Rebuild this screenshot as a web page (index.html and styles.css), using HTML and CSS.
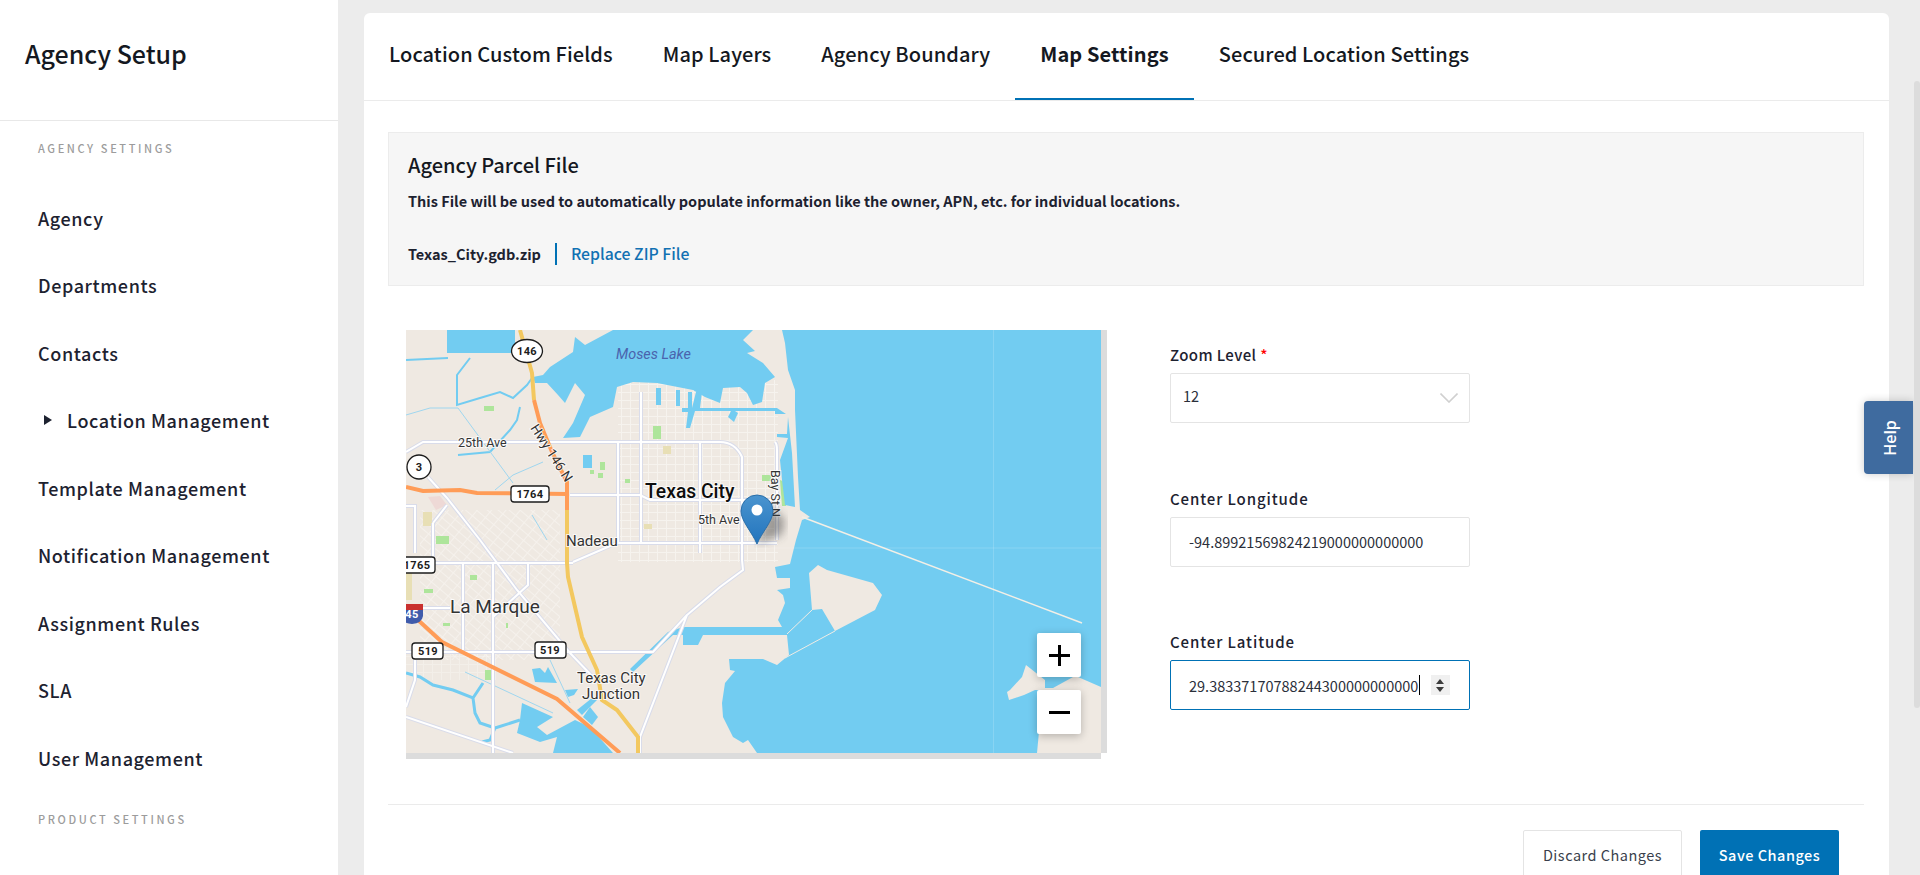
FILE: index.html
```html
<!DOCTYPE html>
<html lang="en">
<head>
    <meta charset="UTF-8">
    <title>Agency Setup</title>
    <link rel="stylesheet" href="styles.css">
</head>
<body>
    <aside class="sidebar">
        <h1 class="sidebar-title">Agency Setup</h1>
        <nav class="side-nav">
            <div class="nav-heading first">AGENCY SETTINGS</div>
            <a class="nav-item">Agency</a>
            <a class="nav-item">Departments</a>
            <a class="nav-item">Contacts</a>
            <a class="nav-item nested"><span class="caret-right"></span>Location Management</a>
            <a class="nav-item">Template Management</a>
            <a class="nav-item">Notification Management</a>
            <a class="nav-item">Assignment Rules</a>
            <a class="nav-item">SLA</a>
            <a class="nav-item">User Management</a>
            <div class="nav-heading">PRODUCT SETTINGS</div>
        </nav>
    </aside>

    <main class="content">
        <section class="card">
            <div class="tabs">
                <a class="tab">Location Custom Fields</a>
                <a class="tab">Map Layers</a>
                <a class="tab">Agency Boundary</a>
                <a class="tab active">Map Settings</a>
                <a class="tab">Secured Location Settings</a>
            </div>

            <div class="card-body">
                <div class="parcel-panel">
                    <h2>Agency Parcel File</h2>
                    <p>This File will be used to automatically populate information like the owner, APN, etc. for individual locations.</p>
                    <div class="file-row">
                        <strong>Texas_City.gdb.zip</strong>
                        <a class="file-link">Replace ZIP File</a>
                    </div>
                </div>

                <div class="settings-row">
                    <div class="map">
                        <svg class="map-svg" viewBox="406 330 695 423" width="695" height="423">
                            <defs>
                                <pattern id="streets" width="9" height="8" patternUnits="userSpaceOnUse">
                                    <path d="M0 .5H9M.5 0V8" class="street-line"/>
                                </pattern>
                                <pattern id="streets-alt" width="11" height="7" patternUnits="userSpaceOnUse" patternTransform="rotate(40)">
                                    <path d="M0 .5H11M.5 0V7" class="street-line"/>
                                </pattern>
                                <linearGradient id="pin-fill" x1="0" y1="0" x2="0" y2="1">
                                    <stop offset="0" stop-color="#4a94cf"/>
                                    <stop offset="1" stop-color="#2274bd"/>
                                </linearGradient>
                                <filter id="pin-blur"><feGaussianBlur stdDeviation="4"/></filter>
                                <path id="road-lines" d="M406 452L423 442H720Q735 442 742 457V560L743 570L720 587L687 615L640 737V753
                                    M428 477L447 498L480 540L517 590L570 653L593 677
                                    M570 495H640L650 500H777M618 443V543M641 392V543M700 443V553M775 442Q777 444 777 450V540
                                    M573 562L617 543H777M435 563H573M406 652H653L687 615M406 608H450
                                    M463 563V650M493 563V753M528 563V585L493 617M415 660V680L406 707M406 717L513 753
                                    M433 523V563M406 506H415V553M447 505L433 523M406 563H435"/>
                            </defs>

                            <rect x="406" y="330" width="695" height="423" class="land"/>

                            <!-- street grids under everything else -->
                            <rect x="618" y="380" width="160" height="182" fill="url(#streets)" opacity=".6"/>
                            <rect x="420" y="510" width="140" height="150" fill="url(#streets-alt)" opacity=".5"/>
                            <rect x="406" y="650" width="90" height="30" fill="url(#streets)" opacity=".35"/>

                            <!-- parks -->
                            <g class="park">
                                <rect x="484" y="406" width="10" height="5"/>
                                <rect x="653" y="426" width="8" height="13"/>
                                <rect x="588" y="461" width="3" height="5"/><rect x="590" y="470" width="4" height="4"/><rect x="600" y="462" width="5" height="8"/>
                                <rect x="598" y="473" width="5" height="5"/><rect x="625" y="479" width="5" height="4"/>
                                <rect x="436" y="536" width="13" height="8"/><rect x="424" y="589" width="9" height="4"/>
                                <rect x="470" y="575" width="7" height="5"/><rect x="443" y="623" width="7" height="3"/>
                                <rect x="485" y="670" width="8" height="10"/><rect x="506" y="623" width="2" height="5"/>
                                <rect x="762" y="475" width="9" height="6"/>
                                <path d="M780 480L785 482L786 506L782 506Z"/>
                            </g>
                            <g class="sand">
                                <rect x="663" y="446" width="8" height="8"/><rect x="644" y="524" width="8" height="5"/>
                                <rect x="423" y="512" width="9" height="14"/><path d="M406 600H412V570H406Z"/>
                            </g>
                            <path class="mall" d="M428 497L440 496L447 505L436 510Z"/>

                            <!-- water -->
                            <g class="water">
                                <rect x="447" y="330" width="68" height="23"/>
                                <path d="M533 377L543 375L550 367L573 352L575 337L585 345L613 330H753L743 340L755 351L747 353L763 363L775 377L765 383L762 402L753 405L747 393L740 387L723 388L720 403L705 397L693 390L657 383L633 382L617 387L613 407L590 417L580 437L563 438L573 423L585 395L575 383L565 403L558 395L547 383L535 383Z"/>
                                <path d="M656 388H661V405H656ZM676 390H680V406H676ZM688 392H692V408H688ZM702 392L700 408H692L696 392Z"/>
                                <path d="M682 408H777L786 414H775V411H695L690 428H686L688 412H682Z"/>
                                <path d="M732 409L738 413L734 422L728 417Z"/>
                                <path d="M782 330H1101V687L1078 677L1073 677L1053 688L1045 688V680L1026 665L1022 677L1010 690L1007 692L1009 700L1024 695L1035 690H1045L1041 710L1037 753H757L748 740L743 743L733 737L723 717L722 703L725 683L735 671L730 670L729 659L763 659L777 665L789 655L787 635H683V645L698 645L703 635H673L633 672L630 669L668 632L683 627H782L778 620L785 603L783 595L777 590L790 588V578L777 578L775 567L790 564L796 540L802 520L810 517L800 510L798 477L795 410L795 390L788 370L785 343Z"/>
                                <path d="M788 417L792 453L795 507L785 505L782 480L780 460L788 438L777 437V434L787 434Z"/>
                                <path d="M522 703L553 717L537 727L547 735L575 720L590 727L613 753H553L557 737L540 742L517 733L520 720Z"/>
                                <path d="M590 707L598 717L592 725L583 717Z"/>
                                <path d="M532 669L540 668L545 673L548 667L557 683L535 682Z"/>
                                <path d="M565 690L578 689L574 695L568 697Z"/>
                                <path d="M577 710L592 698L597 700L582 715Z"/>
                                <rect x="583" y="455" width="9" height="13"/>
                            </g>
                            <g class="river">
                                <path d="M406 360L448 358M470 358L457 375V405L480 398L500 392L513 398L527 385L532 378M520 407L517 420L510 430L490 452L458 455"/>
                                <path d="M406 673L420 677L433 685L453 690L473 698L483 683M473 698L475 713L480 723L495 728L490 740L482 742M495 728L520 720" class="creek"/>
                            </g>
                            <path class="brook" d="M406 415L430 408H458L513 483M495 490L513 475L543 462M532 515L547 540M465 672L553 713M550 660L570 703"/>

                            <!-- barrier strip, jetty and inner islands -->
                            <g class="shore">
                                <path d="M802 517L1082 623" class="jetty"/>
                                <path d="M812 610L787 634M835 631L785 658" class="levee"/>
                            </g>
                            <path class="land" d="M809 573L818 565L827 570L873 583L882 595L875 610L835 631L822 609L812 610Z"/>

                            <!-- roads -->
                            <use href="#road-lines" class="road-casing"/>
                            <use href="#road-lines" class="road-fill"/>

                            <!-- highways -->
                            <path class="hwy-yellow" d="M520 330L532 373L534 400M567 510V563L568 577L582 637L597 670L602 700L617 710L638 737V753"/>
                            <path class="hwy-orange" d="M534 400L540 423L552 452L567 482V510"/>
                            <path class="hwy-orange" d="M406 487L423 491L460 490L477 493L567 494"/>
                            <path class="hwy-orange" d="M418 620L442 642L557 699L620 753"/>

                            <!-- shields -->
                            <g class="shield">
                                <ellipse cx="527" cy="351" rx="15.5" ry="11.5"/>
                                <circle cx="419" cy="467" r="12"/>
                                <rect x="511" y="486" width="38" height="16" rx="3"/>
                                <rect x="400" y="557" width="35" height="16" rx="3"/>
                                <rect x="412" y="643" width="31" height="16" rx="3"/>
                                <rect x="535" y="642" width="31" height="16" rx="3"/>
                            </g>
                            <path class="shield-red" d="M400 604H423V610H400Z"/>
                            <path class="shield-blue" d="M400 610H423V616Q422 623 412 624Q401 623 400 616Z"/>

                            <text class="shield-text" x="527" y="355">146</text>
                            <text class="shield-text" x="419" y="471">3</text>
                            <text class="shield-text" x="530" y="498">1764</text>
                            <text class="shield-text" x="417" y="569">1765</text>
                            <text class="shield-text" x="428" y="655">519</text>
                            <text class="shield-text" x="550" y="654">519</text>
                            <text class="shield-text white" x="412" y="618">45</text>

                            <text class="lbl lake" x="616" y="359">Moses Lake</text>
                            <text class="lbl small" x="458" y="447">25th Ave</text>
                            <text class="lbl hwy-label" transform="translate(530 428) rotate(57)">Hwy 146 N</text>
                            <text class="lbl city" x="645" y="498">Texas City</text>
                            <text class="lbl small" x="698" y="524">5th Ave</text>
                            <text class="lbl mid" x="566" y="546">Nadeau</text>
                            <text class="lbl big" x="450" y="613">La Marque</text>
                            <text class="lbl mid" x="577" y="683">Texas City</text>
                            <text class="lbl mid" x="582" y="699">Junction</text>
                            <text class="lbl small" transform="translate(771 470) rotate(90)">Bay St N</text>

                            <!-- tile seams -->
                            <path class="seam" d="M993.5 330V753M680 548H1101"/>

                            <!-- marker -->
                            <path class="pin-shadow" d="M757 544L770 505L785 520L782 535Z"/>
                            <path class="pin" d="M757 544C752 532 741 521 741 511A16 16 0 0 1 773 511C773 521 762 532 757 544Z"/>
                            <circle cx="757" cy="510" r="5.5" class="pin-hole"/>
                        </svg>
                        <div class="zoom-controls">
                            <button class="zoom-btn" type="button" aria-label="Zoom in"><span class="plus"></span></button>
                            <button class="zoom-btn" type="button" aria-label="Zoom out"><span class="minus"></span></button>
                        </div>
                    </div>

                    <div class="map-form">
                        <div class="form-group">
                            <label class="tight">Zoom Level <span class="req">*</span></label>
                            <div class="select-box">
                                <span>12</span>
                                <svg class="chevron" width="18" height="10" viewBox="0 0 18 10"><path d="M.5 .5L9 9L17.5 .5"/></svg>
                            </div>
                        </div>
                        <div class="form-group">
                            <label for="lng">Center Longitude</label>
                            <input class="text-input" id="lng" type="text" value="-94.89921569824219000000000000">
                        </div>
                        <div class="form-group">
                            <label for="lat">Center Latitude</label>
                            <div class="input-wrap">
                                <input class="text-input focused" id="lat" type="text" value="29.38337170788244300000000000">
                                <span class="text-caret"></span>
                                <span class="spinner"><i class="up"></i><i class="down"></i></span>
                            </div>
                        </div>
                    </div>
                </div>

                <div class="form-actions">
                    <button class="btn btn-light" type="button">Discard Changes</button>
                    <button class="btn btn-primary" type="button">Save Changes</button>
                </div>
            </div>
        </section>
    </main>

    <button class="help-tab" type="button"><span>Help</span></button>
    <div class="scroll-thumb"></div>
</body>
</html>
```

FILE: styles.css
```css
* {
    box-sizing: border-box;
}

html, body {
    height: 875px;
    overflow: hidden;
}

body {
    margin: 0;
    display: flex;
    background-color: #ececec;
    color: #1d2230;
    font-family: "Noto Sans CJK SC", "Noto Sans", sans-serif;
}

/* sidebar */
.sidebar {
    width: 338px;
    flex: none;
    height: 875px;
    background-color: #fff;
}

.sidebar-title {
    margin: 0;
    height: 121px;
    padding: 32px 25px 0;
    font-size: 25px;
    line-height: 42px;
    font-weight: 500;
    color: #141821;
    border-bottom: 1px solid #e8e8e8;
}

.side-nav {
    display: flex;
    flex-direction: column;
}

.nav-heading {
    margin-left: 38px;
    padding-top: 19px;
    font-size: 11px;
    line-height: 16px;
    font-weight: 500;
    letter-spacing: 2.6px;
    color: #9c9c9c;
    height: 60px;
}

.nav-heading.first {
    height: 63px;
    padding-top: 19px;
}

.nav-item {
    height: 67.5px;
    padding-left: 38px;
    display: flex;
    align-items: center;
    font-size: 18px;
    font-weight: 500;
    letter-spacing: .6px;
    color: #1d2230;
}

.nav-item.nested {
    padding-left: 44px;
}

.caret-right {
    width: 0;
    height: 0;
    margin-right: 15px;
    border-left: 8px solid #1d2230;
    border-top: 5.5px solid transparent;
    border-bottom: 5.5px solid transparent;
}

/* main card */
.content {
    flex: 1;
    padding: 13px 31px 0 26px;
}

.card {
    height: 900px;
    background-color: #fff;
    border-radius: 6px 6px 0 0;
}

.tabs {
    height: 88px;
    display: flex;
    border-bottom: 1px solid #ebebeb;
}

.tab {
    padding: 0 25px;
    height: 87px;
    line-height: 82px;
    font-size: 20px;
    font-weight: 500;
    letter-spacing: .1px;
    color: #141821;
}

.tab.active {
    font-weight: 700;
    border-bottom: 2px solid #0071b5;
}

.card-body {
    padding: 31px 25px 0 24px;
}

.parcel-panel {
    height: 154px;
    padding: 18px 19px;
    background-color: #f6f6f6;
    border: 1px solid #ececec;
}

.parcel-panel h2 {
    margin: 0;
    font-size: 20px;
    line-height: 28px;
    font-weight: 500;
    color: #141821;
}

.parcel-panel p {
    margin: 11px 0 0;
    font-size: 14.5px;
    line-height: 22px;
    font-weight: 700;
    color: #1d2230;
}

.file-row {
    margin-top: 31px;
    display: flex;
    align-items: center;
    font-size: 14.5px;
    line-height: 22px;
}

.file-row strong {
    padding-right: 14px;
    border-right: 2px solid #0071b5;
}

.file-link {
    padding-left: 14px;
    font-size: 15.8px;
    font-weight: 500;
    color: #1271b3;
}

/* map + form */
.settings-row {
    margin-top: 44px;
    display: flex;
    height: 475px;
    border-bottom: 1px solid #ebebeb;
}

.map {
    position: relative;
    margin-left: 18px;
    width: 701px;
    height: 429px;
    background:
        linear-gradient(#dcdcdc, #dcdcdc) right top / 6px 423px no-repeat,
        linear-gradient(#dcdcdc, #dcdcdc) left bottom / 695px 6px no-repeat;
}

.map-svg {
    display: block;
}

.land {
    fill: #efe9e2;
}

.street-line {
    fill: none;
    stroke: #fbf9f6;
    stroke-width: 1;
}

.park {
    fill: #aee59b;
}

.sand {
    fill: #e8dfb5;
}

.mall {
    fill: #eed9d6;
}

.water {
    fill: #72ccf1;
}

.river {
    fill: none;
    stroke: #72ccf1;
    stroke-width: 2;
}

.creek {
    stroke-width: 3;
}

.brook {
    fill: none;
    stroke: #9fd6ef;
    stroke-width: 1;
}

.jetty {
    fill: none;
    stroke: #f3efe6;
    stroke-width: 1.5;
}

.levee {
    fill: none;
    stroke: #f0ece5;
    stroke-width: 1;
}

.road-casing {
    fill: none;
    stroke: #d9dcea;
    stroke-width: 4;
}

.road-fill {
    fill: none;
    stroke: #fff;
    stroke-width: 2;
}

.hwy-yellow {
    fill: none;
    stroke: #f3c85f;
    stroke-width: 4;
}

.hwy-orange {
    fill: none;
    stroke: #ff9c57;
    stroke-width: 4;
}

.shield {
    fill: #fff;
    stroke: #1c1c1c;
    stroke-width: 1.3;
}

.shield-red {
    fill: #c9302f;
}

.shield-blue {
    fill: #3f5bab;
}

.shield-text {
    font-family: Roboto, sans-serif;
    font-size: 11px;
    font-weight: 700;
    fill: #1c1c1c;
    text-anchor: middle;
    letter-spacing: .4px;
}

.shield-text.white {
    fill: #fff;
}

.lbl {
    font-family: Roboto, sans-serif;
    fill: #333;
    paint-order: stroke;
    stroke: rgba(255, 255, 255, .75);
    stroke-width: 2px;
}

.lbl.small {
    font-size: 12.5px;
}

.lbl.hwy-label {
    font-size: 13.5px;
}

.lbl.mid {
    font-size: 15px;
}

.lbl.big {
    font-size: 19px;
}

.lbl.city {
    font-size: 19.3px;
    font-weight: 500;
    fill: #0d0d0d;
}

.lbl.lake {
    font-size: 14.4px;
    font-style: italic;
    fill: #4a63ad;
    stroke: none;
}

.seam {
    fill: none;
    stroke: #fff;
    stroke-opacity: .16;
}

.pin-shadow {
    fill: #3b3b3b;
    opacity: .45;
    filter: url(#pin-blur);
}

.pin {
    fill: url(#pin-fill);
    stroke: #2a6ea8;
    stroke-width: 1;
}

.pin-hole {
    fill: #fff;
}

.zoom-controls {
    position: absolute;
    left: 631px;
    top: 303px;
    display: flex;
    flex-direction: column;
    gap: 13px;
}

.zoom-btn {
    width: 44px;
    height: 44px;
    padding: 0;
    border: none;
    border-radius: 2px;
    background-color: #fff;
    box-shadow: 0 2px 8px rgba(0, 0, 0, .25);
    display: flex;
    align-items: center;
    justify-content: center;
}

.plus, .minus {
    display: block;
    position: relative;
    width: 21px;
    height: 3px;
    background-color: #000;
}

.plus::after {
    content: "";
    position: absolute;
    left: 9px;
    top: -9px;
    width: 3px;
    height: 21px;
    background-color: #000;
}

.map-form {
    margin-left: 63px;
    width: 300px;
    padding-top: 14px;
}

.form-group {
    height: 143.5px;
}

.form-group label {
    display: block;
    height: 29px;
    font-size: 15px;
    line-height: 22px;
    font-weight: 500;
    letter-spacing: .9px;
    color: #1d2230;
}

.form-group label.tight {
    letter-spacing: .4px;
}

.req {
    color: #f00;
}

.select-box, .text-input {
    width: 300px;
    height: 50px;
    border: 1px solid #e4e4e4;
    border-radius: 2px;
    background-color: #fff;
    font-family: inherit;
    font-size: 14.5px;
    color: #2b2f3a;
}

.select-box {
    padding: 0 11px 0 12px;
    display: flex;
    align-items: center;
    justify-content: space-between;
}

.select-box span {
    position: relative;
    top: -3px;
}

.chevron {
    fill: none;
    stroke: #d0d0d0;
    stroke-width: 1.6;
}

.text-input {
    display: block;
    padding: 0 18px;
    outline: none;
}

.text-input.focused {
    border: 1px solid #0071b5;
}

.input-wrap {
    position: relative;
}

.text-caret {
    position: absolute;
    left: 249px;
    top: 15px;
    width: 1px;
    height: 20px;
    background-color: #000;
}

.spinner {
    position: absolute;
    left: 261px;
    top: 15px;
    width: 19px;
    height: 20px;
    background-color: #f0f0f0;
}

.spinner i {
    position: absolute;
    left: 5px;
    width: 0;
    height: 0;
    border-left: 4.5px solid transparent;
    border-right: 4.5px solid transparent;
}

.spinner .up {
    top: 4px;
    border-bottom: 5px solid #3c3c3c;
}

.spinner .down {
    top: 12px;
    border-top: 5px solid #3c3c3c;
}

.form-actions {
    padding: 25px 25px 0 0;
    display: flex;
    justify-content: flex-end;
    gap: 18px;
}

.btn {
    height: 48px;
    border-radius: 2px;
    font-family: inherit;
    font-size: 14.5px;
    letter-spacing: .5px;
}

.btn-light {
    width: 159px;
    background-color: #fff;
    border: 1px solid #e4e4e4;
    font-weight: 400;
    color: #3a3f4c;
}

.btn-primary {
    width: 139px;
    background-color: #0071b5;
    border: none;
    font-weight: 500;
    color: #fff;
}

/* help tab and page scrollbar sit over the page */
.help-tab {
    position: absolute;
    left: 1864px;
    top: 401px;
    width: 49px;
    height: 73px;
    padding: 0 0 0 3px;
    border: none;
    border-radius: 4px 0 0 4px;
    background-color: #3f6b9f;
    box-shadow: 0 0 8px rgba(0, 0, 0, .2);
    color: #fff;
    font-family: "Open Sans", sans-serif;
    font-size: 16px;
    font-weight: 600;
}

.help-tab span {
    display: block;
    transform: rotate(-90deg);
}

.scroll-thumb {
    position: absolute;
    right: 0;
    top: 81px;
    width: 6px;
    height: 627px;
    background-color: #dcdcdc;
    border-radius: 3px;
}
```
